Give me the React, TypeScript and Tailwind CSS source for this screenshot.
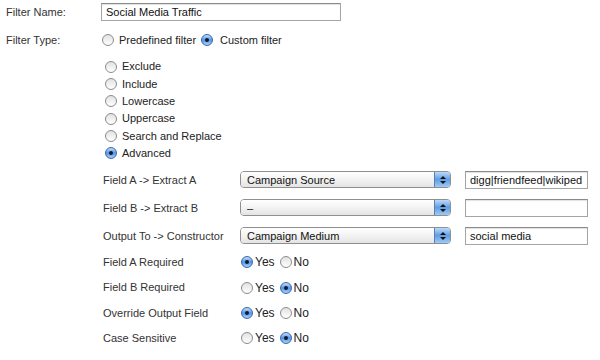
import React from 'react';

function Radio({ checked }: { checked?: boolean }) {
  if (checked) {
    return (
      <span className="relative inline-block w-[12px] h-[12px] shrink-0 rounded-full border border-[#3a68ad] bg-linear-to-b from-[#c4ddf9] via-[#5394e4] to-[#a6d0fa]">
        <span className="absolute left-[3px] top-[3px] w-[4px] h-[4px] rounded-full bg-[#111a2c]" />
      </span>
    );
  }
  return (
    <span className="inline-block w-[12px] h-[12px] shrink-0 rounded-full border border-[#8c8c8c] bg-linear-to-b from-[#e2e2e2] via-[#f0f0f0] to-[#ffffff]" />
  );
}

function Select({ value }: { value: string }) {
  return (
    <div className="flex w-[211px] h-[17px] rounded-[4px] border border-[#8f8f8f] overflow-hidden">
      <div className="flex-1 flex items-center pl-[6px] bg-linear-to-b from-[#ffffff] via-[#f3f3f3] to-[#e4e4e4] text-[11px] text-[#111]">
        {value}
      </div>
      <div className="w-[16px] flex flex-col items-center justify-center gap-[2px] border-l border-[#5b7fb5] bg-linear-to-b from-[#bcd9f8] via-[#5f9de6] to-[#9ccaf6]">
        <span className="w-0 h-0 border-l-[3px] border-r-[3px] border-b-[3px] border-l-transparent border-r-transparent border-b-[#111]" />
        <span className="w-0 h-0 border-l-[3px] border-r-[3px] border-t-[3px] border-l-transparent border-r-transparent border-t-[#111]" />
      </div>
    </div>
  );
}

function TextBox({ value, width }: { value: string; width: string }) {
  return (
    <div className={`${width} h-[18px] flex items-center pl-[4px] border border-[#a5a5a5] border-t-[#8a8a8a] bg-white shadow-[inset_0_1px_1px_rgba(0,0,0,0.12)] text-[11px] text-[#111] overflow-hidden whitespace-nowrap`}>
      {value}
    </div>
  );
}

function YesNo({ yes }: { yes: boolean }) {
  return (
    <div className="flex items-center text-[12px] text-[#222]">
      <Radio checked={yes} />
      <span className="ml-[2px]">Yes</span>
      <span className="ml-[5px]" />
      <Radio checked={!yes} />
      <span className="ml-[2px]">No</span>
    </div>
  );
}

export default function App() {
  const actions = [
    { label: 'Exclude', checked: false },
    { label: 'Include', checked: false },
    { label: 'Lowercase', checked: false },
    { label: 'Uppercase', checked: false },
    { label: 'Search and Replace', checked: false },
    { label: 'Advanced', checked: true }
  ];

  const fields = [
    { label: 'Field A -> Extract A', select: 'Campaign Source', text: 'digg|friendfeed|wikiped' },
    { label: 'Field B -> Extract B', select: '–', text: '' },
    { label: 'Output To -> Constructor', select: 'Campaign Medium', text: 'social media' }
  ];

  const options = [
    { label: 'Field A Required', yes: true },
    { label: 'Field B Required', yes: false },
    { label: 'Override Output Field', yes: true },
    { label: 'Case Sensitive', yes: false }
  ];

  return (
    <div className="w-[600px] h-[360px] bg-white overflow-hidden font-['Liberation_Sans',Arial,sans-serif] text-[11px] text-[#333]">
      {/* Filter name */}
      <div className="flex items-center h-[24px] pl-[6px]">
        <span className="w-[95px]">Filter Name:</span>
        <TextBox value="Social Media Traffic" width="w-[240px]" />
      </div>

      {/* Filter type */}
      <div className="flex items-center h-[24px] mt-[4px] pl-[6px]">
        <span className="w-[96px]">Filter Type:</span>
        <Radio />
        <span className="ml-[5px] text-[#222]">Predefined filter</span>
        <span className="ml-[5px]" />
        <Radio checked />
        <span className="ml-[7px] text-[#222]">Custom filter</span>
      </div>

      {/* Actions */}
      <div className="mt-[6px] pl-[105px]">
        {actions.map((a) => (
          <div key={a.label} className="flex items-center h-[17.3px] text-[#222]">
            <Radio checked={a.checked} />
            <span className="ml-[5px]">{a.label}</span>
          </div>
        ))}
      </div>

      {/* Advanced fields */}
      <div className="mt-[4px] pl-[103px]">
        {fields.map((f) => (
          <div key={f.label} className="flex items-center h-[28px]">
            <span className="w-[137px]">{f.label}</span>
            <Select value={f.select} />
            <div className="ml-[14px]">
              <TextBox value={f.text} width="w-[123px]" />
            </div>
          </div>
        ))}
        {options.map((o) => (
          <div key={o.label} className="flex items-center h-[25.3px]">
            <span className="w-[138px]">{o.label}</span>
            <YesNo yes={o.yes} />
          </div>
        ))}
      </div>
    </div>
  );
}
